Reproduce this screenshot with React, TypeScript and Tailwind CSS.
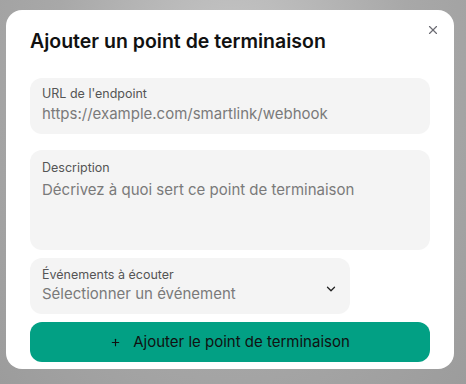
import React from 'react';
import { X, ChevronDown, Plus } from 'lucide-react';

const App: React.FC = () => {
  return (
    <div
      className="w-[466px] h-[384px] overflow-hidden bg-[radial-gradient(ellipse_at_50%_20%,#c8c8c8_0%,#a8a8a8_55%,#9c9c9c_100%)] pt-[10px] pl-[6px]"
      style={{ fontFamily: 'Inter, "Noto Sans", sans-serif' }}
    >
      <div className="relative w-[448px] h-[359px] bg-white rounded-2xl px-6 pt-[19px]">
        <button className="absolute right-[14px] top-[13px] text-[#6b6b73]">
          <X size={14} strokeWidth={2} />
        </button>
        <h2 className="text-[19.5px] font-semibold text-[#111] leading-6">Ajouter un point de terminaison</h2>

        <div className="mt-[25px] flex flex-col gap-4">
          <div className="h-[56px] rounded-xl bg-[#f4f4f4] px-3 pt-[8px]">
            <div className="text-[12.5px] leading-4 text-[#555]">URL de l'endpoint</div>
            <div className="mt-[2px] text-[15px] leading-5 text-[#7a7a7a]">https://example.com/smartlink/webhook</div>
          </div>

          <div className="h-[100px] rounded-xl bg-[#f4f4f4] px-3 pt-[10px]">
            <div className="text-[12.5px] leading-4 text-[#555]">Description</div>
            <div className="mt-[4px] text-[15px] leading-5 text-[#7a7a7a]">Décrivez à quoi sert ce point de terminaison</div>
          </div>
        </div>

        <div className="mt-2 w-[320px] h-[56px] rounded-xl bg-[#f4f4f4] px-3 pt-[9px] flex items-center">
          <div className="flex-1 self-start">
            <div className="text-[12.5px] leading-4 text-[#555]">Événements à écouter</div>
            <div className="mt-[1px] text-[15px] leading-5 text-[#7a7a7a]">Sélectionner un événement</div>
          </div>
          <ChevronDown size={14} strokeWidth={2.2} className="text-[#222] mb-[4px]" />
        </div>

        <button className="mt-2 w-full h-[40px] rounded-xl bg-[#02a084] flex items-center justify-center gap-3 text-[#111] text-[15px]">
          <Plus size={11} strokeWidth={2.5} />
          <span>Ajouter le point de terminaison</span>
        </button>
      </div>
    </div>
  );
};

export default App;
